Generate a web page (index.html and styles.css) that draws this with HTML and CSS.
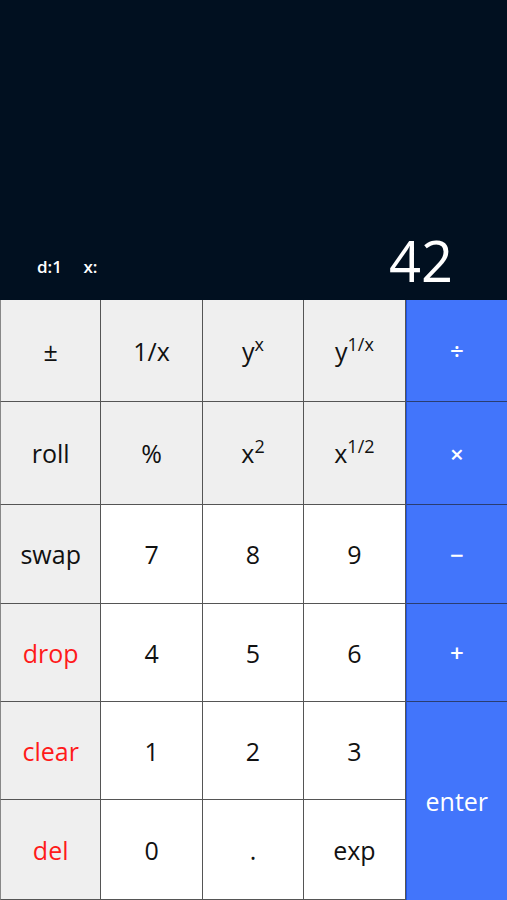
FILE: index.html
```html
<!DOCTYPE html>
<html>
  <head>
    <title>RPN Calc</title>
    <meta name="viewport" content="width=device-width, initial-scale=1">
    <link rel="stylesheet" href="styles.css">
  </head>
  <body>
    <div id="display">
      <div class="info">
        <span id="depth">d:1</span>
        <span id="reg">x:</span>
      </div>
      <div id="value">42</div>
    </div>
    <div id="keys">
      <div class="key fn"><span>&plusmn;</span></div>
      <div class="key fn"><span>1/x</span></div>
      <div class="key fn"><span>y<sup>x</sup></span></div>
      <div class="key fn"><span>y<sup>1/x</sup></span></div>
      <div class="key op"><span>&divide;</span></div>

      <div class="key fn"><span>roll</span></div>
      <div class="key fn"><span>%</span></div>
      <div class="key fn"><span>x<sup>2</sup></span></div>
      <div class="key fn"><span>x<sup>1/2</sup></span></div>
      <div class="key op"><span>&times;</span></div>

      <div class="key fn"><span>swap</span></div>
      <div class="key num"><span>7</span></div>
      <div class="key num"><span>8</span></div>
      <div class="key num"><span>9</span></div>
      <div class="key op"><span>&minus;</span></div>

      <div class="key fn red"><span>drop</span></div>
      <div class="key num"><span>4</span></div>
      <div class="key num"><span>5</span></div>
      <div class="key num"><span>6</span></div>
      <div class="key op"><span>+</span></div>

      <div class="key fn red"><span>clear</span></div>
      <div class="key num"><span>1</span></div>
      <div class="key num"><span>2</span></div>
      <div class="key num"><span>3</span></div>
      <div class="key op enter"><span>enter</span></div>

      <div class="key fn red"><span>del</span></div>
      <div class="key num"><span>0</span></div>
      <div class="key num"><span>.</span></div>
      <div class="key num"><span>exp</span></div>
    </div>
  </body>
</html>
```

FILE: styles.css
```css
body{
  margin:0;
  background:#011020;
  font-family:"Open Sans","Noto Sans",sans-serif;
  }
#display{
  height:300px;
  box-sizing:border-box;
  display:flex;
  align-items:flex-end;
  justify-content:space-between;
  padding:0 54px 12px 37px;
  color:white;
  }
#display .info{
  font-size:17px;
  font-weight:600;
  padding-bottom:10px;
  }
#display .info span{
  margin-right:17px;
  }
#value{
  font-size:56px;
  line-height:1;
  }
#keys{
  display:grid;
  grid-template-columns:repeat(5,1fr);
  grid-template-rows:102px 103px 99px 98px 98px 100px;
  height:600px;
  background:#f0f0f0;
  }
.key{
  display:flex;
  align-items:center;
  justify-content:center;
  font-size:25px;
  color:#111;
  border-right:1px solid #555;
  border-bottom:1px solid #555;
  }
.key:nth-child(5n+1){
  border-left:1px solid #888;
  }
.fn{
  background:#efefef;
  }
.num{
  background:#fff;
  }
.red{
  color:#ff1a1a;
  }
.op{
  background:#4275fb;
  color:white;
  font-size:24px;
  font-weight:600;
  border-left:1px solid #1f52e0;
  border-right:none;
  border-bottom-color:#2a3d70;
  }
.enter{
  grid-row:span 2;
  font-weight:normal;
  font-size:25px;
  border-bottom:none;
  }
sup{
  font-size:0.72em;
  line-height:0;
  vertical-align:0.55em;
  }
```
